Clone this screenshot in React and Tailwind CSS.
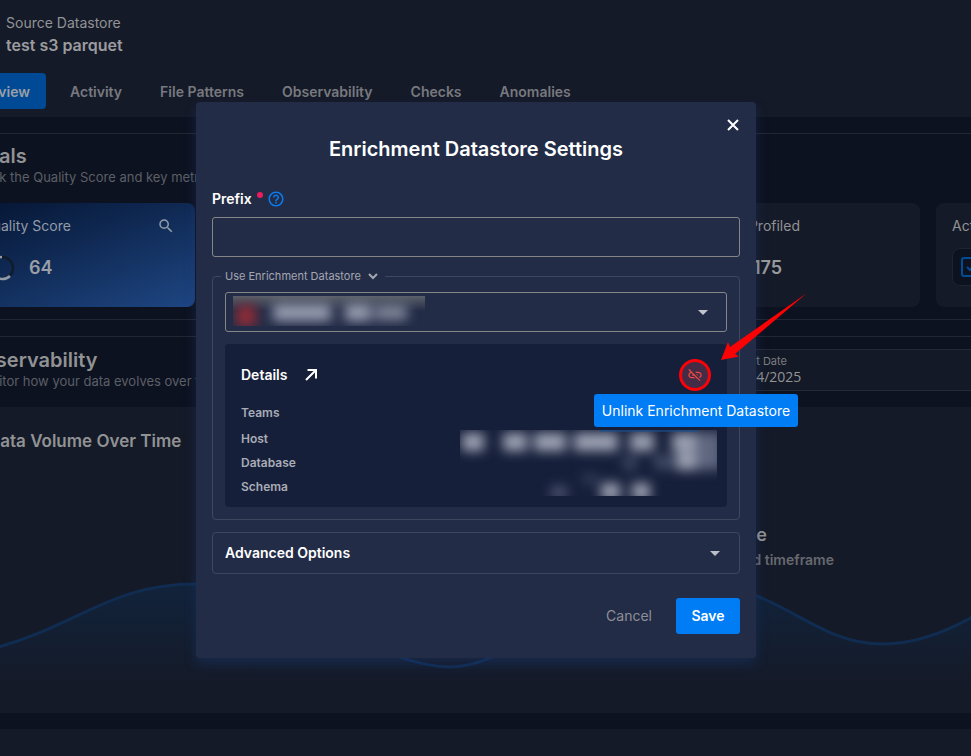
import React from "react";
import { MdArrowDropDown, MdHelpOutline, MdLinkOff, MdSearch } from "react-icons/md";

const tabs = ["Activity", "File Patterns", "Observability", "Checks", "Anomalies"];

function LineIcon({ d, size, width = 2 }) {
  return (
    <svg width={size} height={size} viewBox={`0 0 ${size} ${size}`} fill="none" stroke="currentColor" strokeWidth={width}>
      <path d={d} />
    </svg>
  );
}

function Header() {
  return (
    <header className="h-[117px] bg-[#151a28] pt-[13px]">
      <p className="pl-[6px] text-sm leading-5 text-[#929396]">Source Datastore</p>
      <h1 className="mt-px pl-[6px] text-base leading-[22px] font-semibold text-[#9b9c9f]">test s3 parquet</h1>
      <nav className="mt-[17px] flex h-9 items-stretch text-sm font-semibold text-[#77797f]">
        <button className="flex w-[46px] shrink-0 items-center justify-end overflow-hidden rounded-r bg-[#004a95] pt-0.5 pr-4 text-[#9a9fa6]">
          Overview
        </button>
        <div className="flex gap-[38px] pt-0.5 pl-6">
          {tabs.map((t) => (
            <button key={t}>{t}</button>
          ))}
        </div>
      </nav>
    </header>
  );
}

function SectionTitle({ title, note }) {
  return (
    <div className="-ml-8 whitespace-nowrap">
      <h2 className="text-xl leading-[22px] font-semibold text-[#919294]">{title}</h2>
      <p className="pl-1 text-[13px] leading-5 text-[#5c5f66]">{note}</p>
    </div>
  );
}

function Totals() {
  return (
    <section className="mt-4 border-y border-[#222632] pt-[11px] pb-3">
      <SectionTitle title="Totals" note="Track the Quality Score and key metrics" />
      <div className="mt-4 flex h-[104px] gap-4">
        <div className="w-[195px] overflow-hidden rounded-r-lg bg-linear-160 from-[#071837] to-[#1e4683] pt-[11px] pr-5">
          <div className="flex items-center justify-between text-[#929ba8]">
            <span className="-ml-[18px] text-sm leading-6">Quality Score</span>
            <MdSearch size={18} />
          </div>
          <div className="mt-[17px] flex items-center gap-[14px]">
            <svg width="26" height="26" viewBox="0 0 26 26" fill="none" strokeWidth="2.5" className="-ml-[11px]">
              <circle cx="13" cy="13" r="11" stroke="#101b2b" />
              <path d="M13 2A11 11 0 1 0 21 21" stroke="#929ba8" />
            </svg>
            <span className="text-lg leading-6 font-semibold text-[#9a9fa6]">64</span>
          </div>
        </div>
        <div className="flex flex-1 justify-end rounded-lg bg-[#151a28] pt-[11px] pr-[120px]">
          <div>
            <p className="text-right text-sm leading-6 text-[#919294]">Profiled</p>
            <p className="mt-[18px] pl-1 text-lg leading-6 font-semibold text-[#999a9c]">175</p>
          </div>
        </div>
        <div className="w-[35px] overflow-hidden rounded-l-lg bg-[#151a28] pt-[11px] pl-4 whitespace-nowrap">
          <p className="text-sm leading-6 text-[#919294]">Active</p>
          <div className="mt-[10px] flex size-[38px] items-center justify-center rounded-lg border border-[#20242f] bg-[#0d1220]">
            <svg width="22" height="22" viewBox="0 0 22 22" fill="none" stroke="#004d96" strokeWidth="2">
              <rect x="2" y="2" width="18" height="18" rx="2" />
              <path d="M7 11l3 3 5-6" />
            </svg>
          </div>
        </div>
      </div>
    </section>
  );
}

function Observability() {
  return (
    <section className="mt-4 border-t border-[#222632]">
      <div className="flex pt-3">
        <div className="w-[200px]">
          <SectionTitle title="Observability" note="Monitor how your data evolves over time" />
        </div>
        <div className="flex h-[42px] flex-1 flex-col justify-center border-y border-[#252935] bg-[#141927] pl-[535px]">
          <span className="text-[11px] leading-[14px] text-[#7c7e82]">Start Date</span>
          <span className="font-['Open_Sans',sans-serif] text-sm leading-[18px] text-[#929395]">4/24/2025</span>
        </div>
      </div>
      <div className="mt-4 flex h-[306px] flex-col overflow-hidden bg-[#151a28] pt-5">
        <h3 className="-ml-3 text-[17px] leading-7 font-semibold whitespace-nowrap text-[#919294]">
          Data Volume Over Time
        </h3>
        <div className="mt-[68px] pr-[137px] text-right">
          <p className="pr-[67px] text-lg leading-6 font-semibold text-[#919294]">No Data Available</p>
          <p className="mt-[3px] text-sm leading-5 font-semibold text-[#66696f]">for the selected timeframe</p>
        </div>
        <svg className="-mt-[7px] block h-[150px] w-full shrink-0" viewBox="0 0 971 150" preserveAspectRatio="none">
          <defs>
            <linearGradient id="wave" x1="0" y1="20" x2="0" y2="125" gradientUnits="userSpaceOnUse">
              <stop offset="0" stopColor="#11233b" />
              <stop offset="1" stopColor="#151a28" />
            </linearGradient>
          </defs>
          <path
            d="M-5 85C80 62 110 21 196 21C300 21 370 104 451 104C512 104 590 20 690 20C780 20 810 81 883 81C915 81 945 70 976 52V155H-5Z"
            fill="url(#wave)"
            stroke="#102c50"
            strokeWidth="3"
          />
        </svg>
      </div>
      <div className="mt-4 h-[60px] bg-[#151a28] pt-6">
        <p className="pl-[34px] text-lg leading-6 font-semibold text-[#919294]">Quality Anomalies</p>
      </div>
    </section>
  );
}

function NameSmear() {
  return (
    <svg className="pointer-events-none absolute top-[4px] left-2" width="192" height="30" aria-hidden="true">
      <defs>
        <filter id="soft" x="-50%" y="-100%" width="200%" height="300%" colorInterpolationFilters="sRGB">
          <feGaussianBlur stdDeviation="6" />
        </filter>
        <linearGradient id="edge" x1="0" x2="0" y1="0" y2="1">
          <stop offset="0" stopColor="#5b6069" />
          <stop offset="1" stopColor="#5b6069" stopOpacity="0" />
        </linearGradient>
      </defs>
      <rect width="192" height="15" fill="url(#edge)" />
      <g filter="url(#soft)">
        <rect x="3" y="9" width="20" height="22" fill="#8e2c36" />
        <rect x="40" y="8" width="58" height="17" fill="#989db0" />
        <rect x="112" y="8" width="26" height="17" fill="#989db0" />
        <rect x="142" y="9" width="32" height="15" fill="#81879a" />
      </g>
    </svg>
  );
}

function ValuesSmear() {
  return (
    <svg className="pointer-events-none absolute top-[86px] right-[10px]" width="257" height="66" aria-hidden="true">
      <g filter="url(#soft)" fill="#9da2b3">
        <rect x="2" y="3" width="22" height="18" />
        <rect x="43" y="3" width="24" height="18" />
        <rect x="74" y="3" width="32" height="18" />
        <rect x="114" y="3" width="44" height="18" />
        <rect x="170" y="3" width="24" height="18" />
        <rect x="212" y="3" width="24" height="18" />
        <rect x="216" y="22" width="22" height="18" />
        <rect x="236" y="2" width="26" height="38" fill="#5f6780" />
        <rect x="163" y="26" width="14" height="14" fill="#3c4560" />
        <rect x="194" y="25" width="20" height="14" fill="#424b66" />
        <rect x="91" y="56" width="16" height="13" fill="#4a5270" />
        <rect x="123" y="44" width="14" height="10" fill="#353e5a" />
        <rect x="141" y="53" width="19" height="17" />
        <rect x="172" y="53" width="18" height="17" />
      </g>
      <rect x="140" width="98" height="2" fill="#17508f" opacity="0.6" />
    </svg>
  );
}

function Details() {
  return (
    <div className="relative mt-3 rounded bg-[#161f3a] px-4 pt-[15px] pb-2">
      <div className="flex h-8 items-center">
        <h3 className="text-sm font-semibold text-white">Details</h3>
        <button aria-label="Open datastore" className="ml-4 text-white">
          <LineIcon size={16} d="M3 13L12.500 3.500M4.500 3H13V11.500" />
        </button>
        <button
          aria-label="Unlink"
          className="ml-auto flex size-8 items-center justify-center rounded-full border-3 border-[#fb0208] bg-[#452c46] text-[#f04a42]"
        >
          <MdLinkOff size={16} />
        </button>
      </div>
      <dl className="mt-[10px] text-xs font-semibold text-[#a9acb6]">
        <dt className="mb-[2px] h-6 leading-6">Teams</dt>
        <dt className="h-6 leading-6">Host</dt>
        <dt className="h-6 leading-6">Database</dt>
        <dt className="h-6 leading-6">Schema</dt>
      </dl>
      <ValuesSmear />
    </div>
  );
}

function Dialog() {
  return (
    <div
      role="dialog"
      aria-labelledby="dialog-title"
      className="relative w-[560px] rounded bg-[#232c47] px-4 pt-3 pb-6 shadow-[0_6px_12px_0_rgba(28,60,120,0.38)]"
    >
      <div className="flex justify-end">
        <button aria-label="Close" className="flex h-[22px] items-center text-white">
          <LineIcon size={14} d="M2 2L12 12M12 2L2 12" />
        </button>
      </div>
      <h2 id="dialog-title" className="text-center text-xl leading-[26px] font-semibold text-white">
        Enrichment Datastore Settings
      </h2>
      <div className="mt-[27px] flex h-5 items-center">
        <label htmlFor="prefix" className="text-sm font-semibold text-white">
          Prefix
        </label>
        <span className="mb-2 ml-[5px] size-[6px] rounded-full bg-[#ee1c5c]" />
        <MdHelpOutline size={18} className="ml-1 text-[#0a7cf0]" />
      </div>
      <input
        id="prefix"
        type="text"
        className="mt-2 block h-10 w-full rounded-[3px] border border-[#858688] bg-transparent px-3 text-sm text-white outline-none"
      />
      <fieldset className="mt-[9px] rounded border border-[#3f475f] px-3 pb-3">
        <legend className="-ml-1 h-5 px-1">
          <button className="flex h-5 items-center gap-1 text-[11px] text-[#a3a7b2]">
            Use Enrichment Datastore
            <LineIcon size={16} d="M4 6L8 10L12 6" />
          </button>
        </legend>
        <div className="relative mt-[6px]">
          <select
            aria-label="Enrichment datastore"
            className="block h-10 w-full appearance-none rounded-[3px] border border-[#858688] bg-transparent outline-none"
          />
          <NameSmear />
          <MdArrowDropDown size={24} className="pointer-events-none absolute top-2 right-3 text-[#c3c5ce]" />
        </div>
        <Details />
      </fieldset>
      <button className="mt-3 flex h-[42px] w-full items-center justify-between rounded border border-[#3f475f] px-3 text-sm font-semibold text-white">
        Advanced Options
        <MdArrowDropDown size={24} className="text-[#bcbfc9]" />
      </button>
      <div className="mt-6 flex h-9 justify-end gap-2">
        <button className="px-4 text-sm text-[#8d8f97]">Cancel</button>
        <button className="w-16 rounded-[3px] bg-[#007cf5] text-sm font-semibold text-white">Save</button>
      </div>

      <div
        role="tooltip"
        className="absolute top-[292px] left-[398px] flex h-[33px] w-[204px] items-center justify-center rounded-[3px] bg-[#007cf5] text-sm whitespace-nowrap text-white"
      >
        Unlink Enrichment Datastore
      </div>
      <svg className="pointer-events-none absolute top-[188px] left-[524px]" width="90" height="74" aria-hidden="true">
        <path d="M87 3L10 57L8 52L1 70L19 66.500L15 64Z" fill="#fb0204" />
      </svg>
    </div>
  );
}

export default function App() {
  return (
    <div className="relative h-screen overflow-hidden bg-[#0d1220] font-['Inter',sans-serif]">
      <Header />
      <Totals />
      <Observability />
      <div className="absolute inset-0 flex items-start justify-center pt-[102px] pr-[19px]">
        <Dialog />
      </div>
    </div>
  );
}
